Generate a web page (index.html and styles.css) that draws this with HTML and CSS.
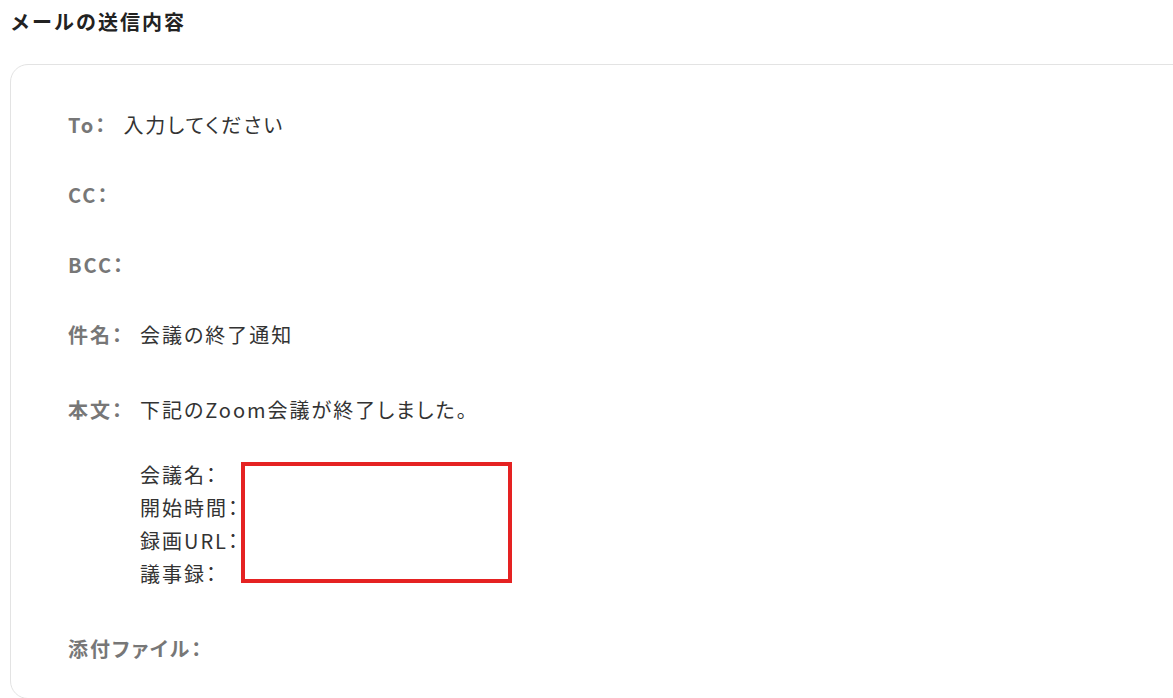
FILE: index.html
```html
<!DOCTYPE html>
<html lang="ja">
  <head>
    <meta charset="utf-8" />
    <title>メールの送信内容</title>
    <link rel="stylesheet" href="styles.css">
  </head>
  <body>
    <h1 class="page-title">メールの送信内容</h1>

    <section class="mail-card">
      <div class="mail-row">
        <span class="mail-label">To：</span>
        <span class="mail-value">入力してください</span>
      </div>
      <div class="mail-row">
        <span class="mail-label">CC：</span>
      </div>
      <div class="mail-row">
        <span class="mail-label">BCC：</span>
      </div>
      <div class="mail-row">
        <span class="mail-label">件名：</span>
        <span class="mail-value">会議の終了通知</span>
      </div>
      <div class="mail-row mail-row--body">
        <span class="mail-label">本文：</span>
        <div class="mail-body">
          <p>下記のZoom会議が終了しました。</p>
          <div class="mail-fields">
            <p>会議名：</p>
            <p>開始時間：</p>
            <p>録画URL：</p>
            <p>議事録：</p>
            <div class="highlight"></div>
          </div>
        </div>
      </div>
      <div class="mail-row">
        <span class="mail-label">添付ファイル：</span>
      </div>
    </section>
  </body>
</html>
```

FILE: styles.css
```css
html {
  height: 100%;
}

body {
  margin: 0;
  height: 100%;
  overflow: hidden;
  background-color: #fff;
  color: #333;
  font-family: "Noto Sans CJK JP", "Noto Sans", sans-serif;
}

*,
:after,
:before {
  box-sizing: border-box;
}

p {
  margin: 0;
}

.page-title {
  margin: 0;
  padding: 8px 10px 0;
  height: 64px;
  color: #222;
  font-size: 20px;
  font-weight: bold;
  line-height: 28px;
  letter-spacing: 0.1em;
}

.mail-card {
  width: 1200px;
  margin-left: 10px;
  padding: 43px 0 33px 57px;
  border: 1px solid #e3e3e3;
  border-radius: 18px;
  font-size: 20px;
  line-height: 33px;
  letter-spacing: 0.1em;
  font-feature-settings: "palt";
}

.mail-row {
  display: flex;
  align-items: flex-start;
  margin-bottom: 37px;
}

.mail-row:last-child {
  margin-bottom: 0;
}

.mail-row--body {
  margin-top: 42px;
  margin-bottom: 42px;
}

.mail-label {
  color: #777;
  font-weight: bold;
  margin-right: 16px;
}

.mail-value,
.mail-body {
  color: #333;
}

.mail-fields {
  position: relative;
  margin-top: 32px;
}

.highlight {
  position: absolute;
  top: 4px;
  left: 101px;
  width: 271px;
  height: 121px;
  border: 4px solid #e52222;
}
```
